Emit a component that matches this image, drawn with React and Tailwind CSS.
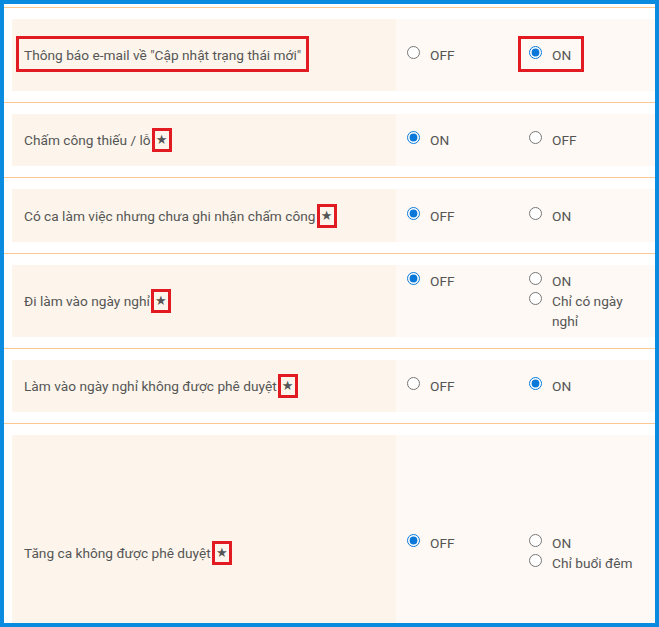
import React from "react";

const rows = [
  { label: 'Thông báo e-mail về "Cập nhật trạng thái mới"', boxed: true, h: "h-[72px]", a: [{ t: "OFF" }], b: [{ t: "ON", c: true, box: true }] },
  { label: "Chấm công thiếu / lỗ", star: true, h: "h-[52px]", a: [{ t: "ON", c: true }], b: [{ t: "OFF" }] },
  { label: "Có ca làm việc nhưng chưa ghi nhận chấm công", star: true, h: "h-[53px]", a: [{ t: "OFF", c: true }], b: [{ t: "ON" }] },
  { label: "Đi làm vào ngày nghỉ", star: true, h: "h-[72px]", a: [{ t: "OFF", c: true }], b: [{ t: "ON" }, { t: "Chỉ có ngày nghỉ" }] },
  { label: "Làm vào ngày nghỉ không được phê duyệt", star: true, h: "h-[52px]", a: [{ t: "OFF" }], b: [{ t: "ON", c: true }] },
  { label: "Tăng ca không được phê duyệt", star: true, h: "h-[236px]", a: [{ t: "OFF", c: true }], b: [{ t: "ON" }, { t: "Chỉ buổi đêm" }] },
];

function Opt({ o, name }) {
  return (
    <label className="relative flex items-start leading-[20px]">
      <input
        type="radio"
        name={name}
        defaultChecked={!!o.c}
        className="m-0 mt-[1px] w-[13px] h-[13px] shrink-0 accent-[#0a78d8]"
      />
      <span className="ml-[10px]">{o.t}</span>
      {o.box && (
        <span className="absolute left-[-11px] top-[-9px] w-[66px] h-[36px] border-[3px] border-[#e21b23] pointer-events-none" />
      )}
    </label>
  );
}

function Group({ opts, name }) {
  return (
    <div className="w-[122px] pl-[5px] flex flex-col">
      {opts.map((o, i) => (
        <Opt key={i} o={o} name={name} />
      ))}
    </div>
  );
}

export default function App() {
  return (
    <div
      className="w-[659px] h-[627px] border-4 border-[#0a8be0] bg-white overflow-hidden text-[13.7px] text-[#555555]"
      style={{ fontFamily: "Roboto, 'Noto Sans', 'Liberation Sans', sans-serif" }}
    >
      <div className="mt-[3px] border-t border-[#fcc994]" />
      {rows.map((r, i) => (
        <div key={i} className="pl-[8px] pt-[11px] pb-[11px] border-b border-[#fcc994] flex">
          <div className={`w-[384px] ${r.h} bg-[#fdf5ec] pl-[12px] flex items-center shrink-0`}>
            <span className="inline-flex items-center leading-[20px]">
              {r.boxed ? (
                <span className="relative inline-block">
                  {r.label}
                  <span className="absolute left-[-8px] right-[-8px] top-[-9px] bottom-[-7px] border-[3px] border-[#e21b23] pointer-events-none" />
                </span>
              ) : (
                <span>{r.label}</span>
              )}
              {r.star && (
                <span
                  className="inline-block ml-[4px] w-[14px] h-[18px] leading-[18px] text-center text-[13px] text-[#555555] outline-[3px] outline-solid outline-[#e21b23]"
                  style={{ fontFamily: "'DejaVu Sans', sans-serif" }}
                >
                  ★
                </span>
              )}
            </span>
          </div>
          <div className={`flex-1 ${r.h} bg-[#fef9f4] pl-[6px] flex items-center`}>
            <div className="flex items-start">
              <Group opts={r.a} name={`r${i}`} />
              <Group opts={r.b} name={`r${i}`} />
            </div>
          </div>
        </div>
      ))}
    </div>
  );
}
